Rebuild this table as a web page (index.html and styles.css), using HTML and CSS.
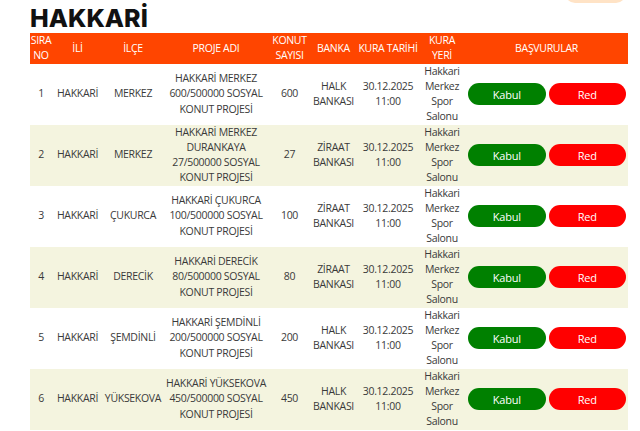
FILE: index.html
```html
<!DOCTYPE html>
<html lang="tr">
<head>
<meta charset="utf-8">
<title>HAKKARİ</title>
<link rel="stylesheet" href="styles.css">
</head>
<body>
<div class="page">
  <div class="topbar"><span class="top-btn"></span></div>
  <h1 class="title">HAKKARİ</h1>
  <table class="list">
    <colgroup>
      <col class="c-no"><col class="c-il"><col class="c-ilce"><col class="c-proje"><col class="c-konut"><col class="c-banka"><col class="c-tarih"><col class="c-yer"><col class="c-basvuru">
    </colgroup>
    <thead>
      <tr>
        <th>SIRA NO</th><th>İLİ</th><th>İLÇE</th><th>PROJE ADI</th><th>KONUT SAYISI</th><th>BANKA</th><th>KURA TARİHİ</th><th>KURA YERİ</th><th>BAŞVURULAR</th>
      </tr>
    </thead>
    <tbody>
      <tr>
        <td>1</td><td>HAKKARİ</td><td>MERKEZ</td><td>HAKKARİ MERKEZ 600/500000 SOSYAL KONUT PROJESİ</td><td>600</td><td>HALK BANKASI</td><td>30.12.2025 11:00</td><td>Hakkari Merkez Spor Salonu</td>
        <td><div class="actions"><button class="btn ok">Kabul</button><button class="btn no">Red</button></div></td>
      </tr>
      <tr>
        <td>2</td><td>HAKKARİ</td><td>MERKEZ</td><td>HAKKARİ MERKEZ DURANKAYA 27/500000 SOSYAL KONUT PROJESİ</td><td>27</td><td>ZİRAAT BANKASI</td><td>30.12.2025 11:00</td><td>Hakkari Merkez Spor Salonu</td>
        <td><div class="actions"><button class="btn ok">Kabul</button><button class="btn no">Red</button></div></td>
      </tr>
      <tr>
        <td>3</td><td>HAKKARİ</td><td>ÇUKURCA</td><td>HAKKARİ ÇUKURCA 100/500000 SOSYAL KONUT PROJESİ</td><td>100</td><td>ZİRAAT BANKASI</td><td>30.12.2025 11:00</td><td>Hakkari Merkez Spor Salonu</td>
        <td><div class="actions"><button class="btn ok">Kabul</button><button class="btn no">Red</button></div></td>
      </tr>
      <tr>
        <td>4</td><td>HAKKARİ</td><td>DERECİK</td><td>HAKKARİ DERECİK 80/500000 SOSYAL KONUT PROJESİ</td><td>80</td><td>ZİRAAT BANKASI</td><td>30.12.2025 11:00</td><td>Hakkari Merkez Spor Salonu</td>
        <td><div class="actions"><button class="btn ok">Kabul</button><button class="btn no">Red</button></div></td>
      </tr>
      <tr>
        <td>5</td><td>HAKKARİ</td><td>ŞEMDİNLİ</td><td>HAKKARİ ŞEMDİNLİ 200/500000 SOSYAL KONUT PROJESİ</td><td>200</td><td>HALK BANKASI</td><td>30.12.2025 11:00</td><td>Hakkari Merkez Spor Salonu</td>
        <td><div class="actions"><button class="btn ok">Kabul</button><button class="btn no">Red</button></div></td>
      </tr>
      <tr>
        <td>6</td><td>HAKKARİ</td><td>YÜKSEKOVA</td><td>HAKKARİ YÜKSEKOVA 450/500000 SOSYAL KONUT PROJESİ</td><td>450</td><td>HALK BANKASI</td><td>30.12.2025 11:00</td><td>Hakkari Merkez Spor Salonu</td>
        <td><div class="actions"><button class="btn ok">Kabul</button><button class="btn no">Red</button></div></td>
      </tr>
    </tbody>
  </table>
</div>
</body>
</html>
```

FILE: styles.css
```css
html, body {
  margin: 0;
  padding: 0;
  background: #ffffff;
}
.page {
  padding: 0 12px 0 30px;
  font-family: "Open Sans", "Noto Sans", sans-serif;
  color: #3a3a3a;
}
.topbar {
  display: flex;
  justify-content: flex-end;
  align-items: flex-end;
  height: 3px;
}
.top-btn {
  display: block;
  width: 61px;
  height: 24px;
  flex-shrink: 0;
  margin-right: 2px;
  background: #ffe3c6;
  border-radius: 10px;
}
.title {
  margin: 0;
  font-family: "Inter", "Liberation Sans", sans-serif;
  font-weight: 800;
  font-size: 25px;
  line-height: 30px;
  color: #111111;
}
.list {
  width: 598px;
  border-collapse: collapse;
  table-layout: fixed;
  font-size: 10.5px;
  line-height: 15.25px;
  letter-spacing: -0.3px;
}
.c-no { width: 22px; }
.c-il { width: 51px; }
.c-ilce { width: 60px; }
.c-proje { width: 106px; }
.c-konut { width: 41px; }
.c-banka { width: 47px; }
.c-tarih { width: 62px; }
.c-yer { width: 46px; }
.c-basvuru { width: 163px; }
.list th {
  background: #ff4500;
  color: #ffffff;
  font-weight: 400;
  padding: 0;
  text-align: center;
  vertical-align: middle;
  height: 30px;
}
.list td {
  padding: 0;
  text-align: center;
  vertical-align: middle;
  height: 61px;
}
.list tbody tr:nth-child(even) td {
  background: #f4f4df;
}
.actions {
  display: flex;
  gap: 3px;
  padding: 0 2px 0 3px;
}
.btn {
  flex: 1;
  height: 22px;
  border: none;
  border-radius: 11px;
  color: #ffffff;
  font-family: "Open Sans", "Noto Sans", sans-serif;
  font-size: 11px;
  letter-spacing: -0.2px;
  padding: 0;
}
.btn.ok { background: #008000; }
.btn.no { background: #ff0000; }
```
